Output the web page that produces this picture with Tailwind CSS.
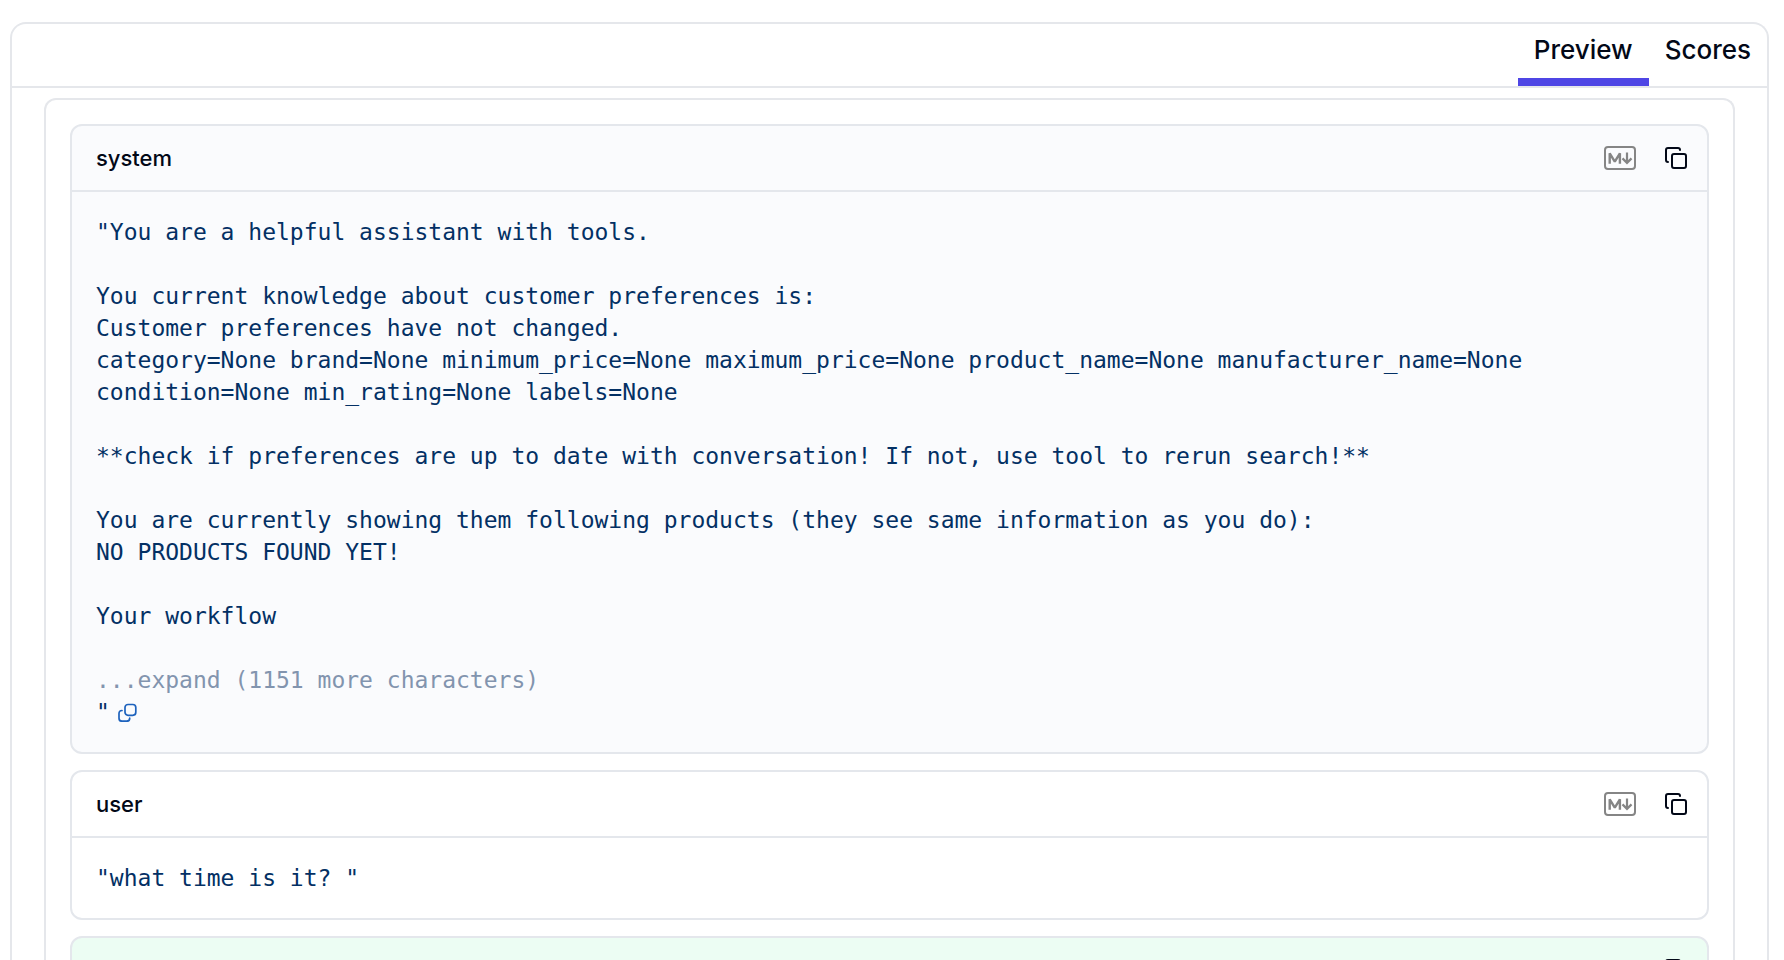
<!DOCTYPE html>
<html lang="en">
<head>
<meta charset="utf-8">
<title>Preview</title>
<script src="https://cdn.jsdelivr.net/npm/@tailwindcss/browser@4"></script>
</head>
<body class="h-screen overflow-hidden bg-white pt-[22px] pr-[15px] pl-[10px] font-['Inter',sans-serif] text-[#020817]">
<svg class="hidden" aria-hidden="true">
  <symbol id="copy" viewBox="0 0 24 24" fill="none" stroke="currentColor" stroke-width="2" stroke-linecap="round" stroke-linejoin="round">
    <rect x="8" y="8" width="14" height="14" rx="2"/>
    <path d="M4 16c-1.100 0-2-.9-2-2V4c0-1.100.9-2 2-2h10c1.100 0 2 .9 2 2"/>
  </symbol>
  <symbol id="markdown" viewBox="0 0 32 24" fill="none" stroke="currentColor" stroke-width="2">
    <rect x="1" y="1" width="30" height="22" rx="3"/>
    <path d="M5.700 17.700V7.300l5.100 8.400 5.100-8.400v10.400" stroke-width="2.400" stroke-linejoin="bevel"/>
    <path d="M23 6.500v10.300M18.500 12.400l4.500 4.500 4.500-4.500" stroke-width="2.200"/>
  </symbol>
</svg>
<main class="h-full overflow-hidden rounded-t-2xl border-2 border-b-0 border-[#e5e7eb]">
  <nav role="tablist" class="flex h-16 justify-end border-b-2 border-[#e5e7eb] text-[26px] font-medium leading-8">
    <button role="tab" aria-selected="true" class="border-b-8 border-[#4f46e5] px-4 pt-[10px] pb-3">Preview</button>
    <button role="tab" aria-selected="false" class="border-b-8 border-transparent px-4 pt-[10px] pb-3">Scores</button>
  </nav>
  <div class="mx-8 mt-[10px] flex h-full flex-col gap-4 rounded-t-xl border-2 border-b-0 border-[#e5e7eb] p-6">
    <section class="shrink-0 rounded-xl border-2 border-[#e4e7ec] bg-[#fafbfd]">
      <header class="flex h-[66px] items-center gap-7 border-b-2 border-[#e4e7ec] pr-[19px] pl-6">
        <h2 class="mr-auto text-[22px] font-medium leading-8">system</h2>
        <button aria-label="Toggle markdown" class="text-[#858585]"><svg class="h-6 w-8"><use href="#markdown"/></svg></button>
        <button aria-label="Copy"><svg class="size-6"><use href="#copy"/></svg></button>
      </header>
      <div class="p-6 font-['DejaVu_Sans_Mono',monospace] text-[23px] leading-8 text-[#033064]">
        <div class="whitespace-pre-wrap">"You are a helpful assistant with tools.

You current knowledge about customer preferences is:
Customer preferences have not changed.
category=None brand=None minimum_price=None maximum_price=None product_name=None manufacturer_name=None condition=None min_rating=None labels=None

**check if preferences are up to date with conversation! If not, use tool to rerun search!**

You are currently showing them following products (they see same information as you do):
NO PRODUCTS FOUND YET!

Your workflow
</div>
        <button class="mt-8 block text-left text-[#8294ae]">...expand (1151 more characters)</button>
        <div class="flex h-8 items-center gap-2"><span>"</span><button aria-label="Copy value" class="text-[#1d62bd]"><svg class="size-5" viewBox="0 0 20 20" fill="none" stroke="currentColor" stroke-width="1.700" stroke-linecap="round"><rect x="7" y="2.500" width="10.800" height="10.800" rx="3"/><path d="M4 8.500c-2 0-3 1-3 3v4.700c0 2 1 3 3 3h4.700c2 0 3-1 3-3"/></svg></button></div>
      </div>
    </section>
    <section class="shrink-0 rounded-xl border-2 border-[#e4e7ec] bg-white">
      <header class="flex h-[66px] items-center gap-7 border-b-2 border-[#e4e7ec] pr-[19px] pl-6">
        <h2 class="mr-auto text-[22px] font-medium leading-8">user</h2>
        <button aria-label="Toggle markdown" class="text-[#858585]"><svg class="h-6 w-8"><use href="#markdown"/></svg></button>
        <button aria-label="Copy"><svg class="size-6"><use href="#copy"/></svg></button>
      </header>
      <div class="p-6 font-['DejaVu_Sans_Mono',monospace] text-[23px] leading-8 text-[#033064]">"what time is it? "</div>
    </section>
    <section class="shrink-0 rounded-xl border-2 border-[#e4e7ec] bg-[#ecfdf3]">
      <header class="flex h-[66px] items-center justify-end border-b-2 border-[#e4e7ec] pr-[19px] pl-6">
        <button aria-label="Copy"><svg class="size-6"><use href="#copy"/></svg></button>
      </header>
    </section>
  </div>
</main>
</body>
</html>
